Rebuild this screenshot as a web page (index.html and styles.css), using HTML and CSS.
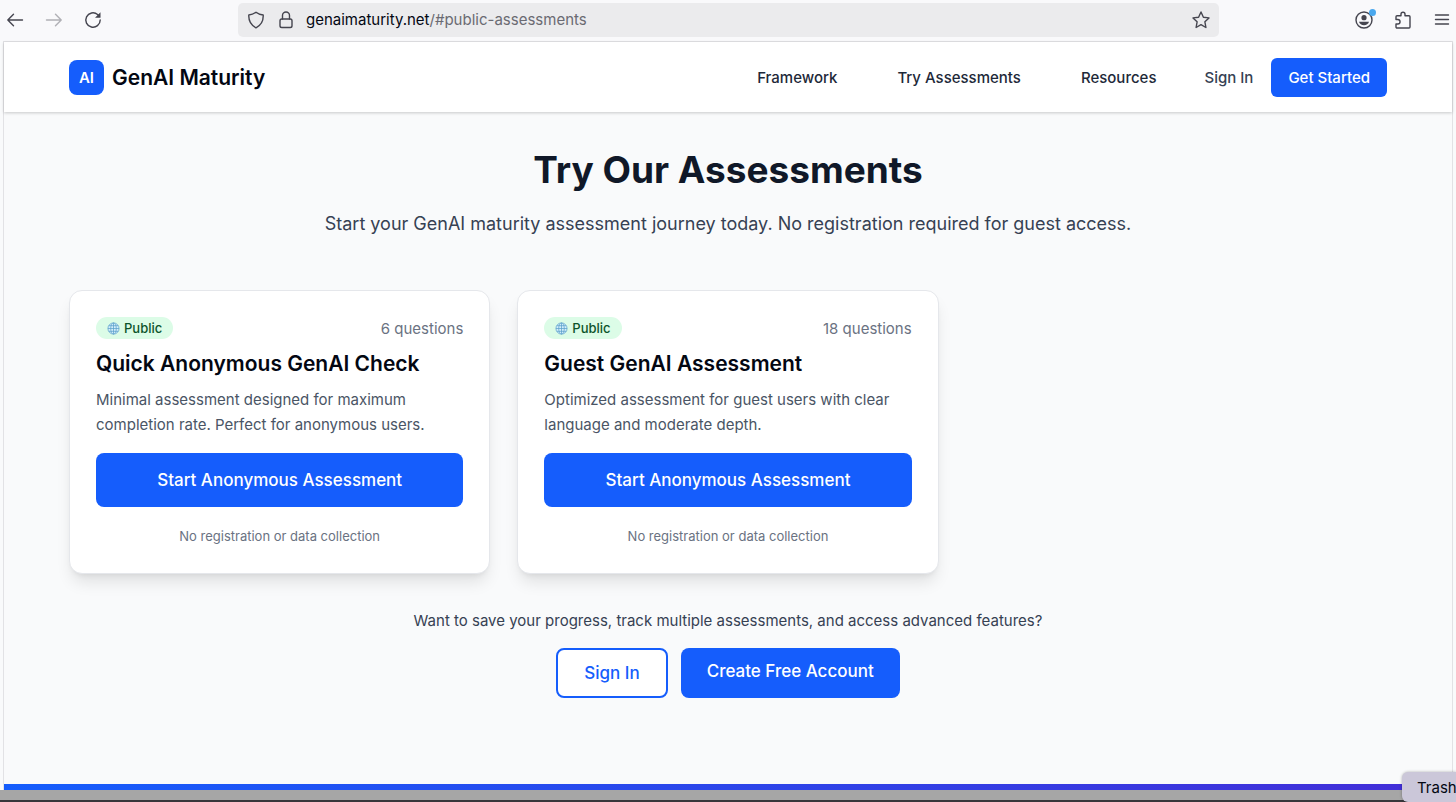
FILE: index.html
```
<!DOCTYPE html>
<html lang="en">
<head>
    <meta charset="utf-8">
    <title>GenAI Maturity</title>
    <link rel="stylesheet" href="styles.css">
</head>
<body>

<div class="toolbar">
    <div class="toolbar-nav">
        <button type="button" class="icon-btn" aria-label="Back">
            <svg viewBox="0 0 20 20"><path d="M17.500 10H2.800M8.500 4.300L2.800 10l5.700 5.700"/></svg>
        </button>
        <button type="button" class="icon-btn dim" aria-label="Forward">
            <svg viewBox="0 0 20 20"><path d="M2.500 10h14.700M11.500 4.300l5.700 5.700-5.700 5.700"/></svg>
        </button>
        <button type="button" class="icon-btn" aria-label="Reload">
            <svg viewBox="0 0 20 20"><path d="M17.200 10a7.200 7.200 0 1 1-2.600-5.500l1.800 1.800"/><path class="solid" d="M17.500 2.200v5.500H12z"/></svg>
        </button>
    </div>
    <div class="address">
        <svg class="icon" viewBox="0 0 20 20"><path d="M10 2.200c2.200 1.700 4.400 2.600 7.200 2.800.3 5.400-1.500 9.900-7.200 12.800C4.300 14.900 2.500 10.400 2.800 5 5.600 4.800 7.800 3.900 10 2.200z"/></svg>
        <svg class="icon" viewBox="0 0 20 20"><rect x="4" y="9" width="12" height="8.500" rx="1.800"/><path d="M6.500 9V5.500a3.500 3.500 0 0 1 7 0V9"/></svg>
        <span class="url">genaimaturity.net<span class="path">/#public-assessments</span></span>
        <button type="button" class="icon-btn" aria-label="Bookmark">
            <svg viewBox="0 0 20 20"><path d="M10 2l2.400 5.200 5.600.7-4.100 3.900 1 5.700-4.900-2.800-4.900 2.800 1-5.700L2 7.900l5.600-.7z"/></svg>
        </button>
    </div>
    <div class="toolbar-menu">
        <button type="button" class="icon-btn account" aria-label="Account">
            <svg viewBox="0 0 20 20"><circle cx="10" cy="10" r="8"/><circle class="solid" cx="10" cy="7.700" r="2.600"/><path class="solid" d="M5 11.800h10c-.6 2.200-2.600 3.500-5 3.500s-4.400-1.300-5-3.500z"/></svg>
            <span class="dot"></span>
        </button>
        <button type="button" class="icon-btn" aria-label="Extensions">
            <svg viewBox="0 0 20 20"><path d="M3 9V6.700a1 1 0 0 1 1-1h4V4.200a2 2 0 0 1 4 0v1.500h4a1 1 0 0 1 1 1V17a1 1 0 0 1-1 1H4a1 1 0 0 1-1-1v-3h1.800a2 2 0 0 0 0-4.500H3z"/></svg>
        </button>
        <button type="button" class="icon-btn" aria-label="Menu">
            <svg viewBox="0 0 20 20"><path d="M3.500 5h13M3.500 9.500h13M3.500 14h13"/></svg>
        </button>
    </div>
</div>

<div class="page">
    <header class="site-header">
        <a href="#" class="brand"><span class="logo">AI</span>GenAI Maturity</a>
        <nav>
            <a href="#framework">Framework</a>
            <a href="#public-assessments">Try Assessments</a>
            <a href="#resources">Resources</a>
        </nav>
        <a href="#signin" class="signin">Sign In</a>
        <button type="button" class="btn btn-small">Get Started</button>
    </header>

    <main id="public-assessments">
        <h1>Try Our Assessments</h1>
        <p class="lead">Start your GenAI maturity assessment journey today. No registration required for guest access.</p>

        <div class="cards">
            <section class="card">
                <div class="card-top">
                    <span class="badge"><svg viewBox="0 0 14 14"><circle cx="7" cy="7" r="6"/><ellipse cx="7" cy="7" rx="3" ry="6"/><path d="M7 1v12M1 7h12M2 4h10M2 10h10"/></svg>Public</span>
                    <span class="count">6 questions</span>
                </div>
                <h2>Quick Anonymous GenAI Check</h2>
                <p class="desc">Minimal assessment designed for maximum completion rate. Perfect for anonymous users.</p>
                <button type="button" class="btn btn-wide">Start Anonymous Assessment</button>
                <p class="note">No registration or data collection</p>
            </section>
            <section class="card">
                <div class="card-top">
                    <span class="badge"><svg viewBox="0 0 14 14"><circle cx="7" cy="7" r="6"/><ellipse cx="7" cy="7" rx="3" ry="6"/><path d="M7 1v12M1 7h12M2 4h10M2 10h10"/></svg>Public</span>
                    <span class="count">18 questions</span>
                </div>
                <h2>Guest GenAI Assessment</h2>
                <p class="desc">Optimized assessment for guest users with clear language and moderate depth.</p>
                <button type="button" class="btn btn-wide">Start Anonymous Assessment</button>
                <p class="note">No registration or data collection</p>
            </section>
        </div>

        <p class="prompt">Want to save your progress, track multiple assessments, and access advanced features?</p>
        <div class="actions">
            <button type="button" class="btn btn-outline">Sign In</button>
            <button type="button" class="btn btn-create">Create Free Account</button>
        </div>
    </main>

    <div class="banner"></div>
</div>
<div class="desktop-edge"></div>
<div class="trash">Trash</div>

</body>
</html>
```
FILE: styles.css
```
* { box-sizing: border-box; }
body { font-family: Inter, "Liberation Sans", sans-serif; background-color: #f9fafb; color: #030712; margin: 0; height: 100vh; display: flex; flex-direction: column; overflow: hidden; }
h1, h2, p { margin: 0; }
a { color: inherit; text-decoration: none; }
button { font-family: inherit; border: none; cursor: pointer; }

/* Browser toolbar */
.toolbar { display: flex; align-items: center; height: 41px; flex: none; padding: 0 5px; background: #f9f9fb; }
.toolbar svg { display: block; width: 20px; height: 20px; fill: none; stroke: #45454f; stroke-width: 1.4; stroke-linecap: round; stroke-linejoin: round; }
.toolbar .solid { fill: #45454f; stroke: none; }
.icon-btn { display: block; padding: 0; background: none; }
.dim { opacity: 0.4; }
.toolbar-nav { display: flex; gap: 19px; width: 233px; flex: none; margin-bottom: 2px; }
.address { display: flex; align-items: center; flex: 1; gap: 10px; height: 34px; padding: 0 8px; margin-bottom: 2px; background: #ebebed; border-radius: 5px; }
.url { flex: 1; font-size: 15px; }
.path { color: #6a6a72; }
.toolbar-menu { display: flex; gap: 19px; margin-left: 135px; margin-right: -1px; margin-bottom: 2px; }
.account { position: relative; }
.dot { position: absolute; top: -1px; right: -2px; width: 7px; height: 7px; border-radius: 50%; background: #4aa8ee; }

/* Page */
.page { flex: 1; display: flex; flex-direction: column; margin: 0 3px; border: 1px solid #e2e2e5; border-bottom: none; min-height: 0; }
.site-header { display: flex; align-items: center; height: 70px; flex: none; padding: 0 65px; background: white; box-shadow: 0 1px 3px rgba(0,0,0,0.2); font-size: 15px; font-weight: 500; color: #1e2939; }
.brand { display: flex; align-items: center; gap: 8px; margin-right: auto; font-size: 21px; font-weight: 600; color: #030712; }
.logo { display: flex; align-items: center; justify-content: center; width: 35px; height: 35px; border-radius: 8px; background: #155dfc; color: white; font-size: 15px; }
nav { display: flex; gap: 60px; }
.signin { margin: 0 18px 0 48px; color: #364153; }

.btn { background-color: #155dfc; color: white; border-radius: 8px; font-size: 17px; font-weight: 500; }
.btn:hover { background-color: #1447e6; }
.btn-small { height: 39px; padding: 0 17px; font-size: 15px; border-radius: 6px; }

main { flex: 1; padding: 32px 65px; text-align: center; min-height: 0; }
h1 { font-size: 37px; line-height: 52px; font-weight: 700; color: #101828; }
.lead { margin-top: 13px; font-size: 18px; line-height: 30px; color: #364153; }
.cards { display: grid; grid-template-columns: repeat(3, 1fr); gap: 27px; margin-top: 51px; text-align: left; }
.card { padding: 26px; background: white; border: 1px solid #e5e7eb; border-radius: 13px; box-shadow: 0 11px 16px -3px rgba(0,0,0,0.1), 0 4px 6px -4px rgba(0,0,0,0.1); }
.card-top { display: flex; align-items: center; justify-content: space-between; height: 22px; }
.badge { display: flex; align-items: center; gap: 4px; height: 22px; padding: 0 11px; border-radius: 11px; background: #dcfce7; color: #0d542b; font-size: 13px; font-weight: 500; }
.badge svg { width: 13px; height: 13px; fill: #d3effb; stroke: #5a9fca; stroke-width: 0.8; }
.count { font-size: 15px; color: #6a7282; }
h2 { margin-top: 10px; font-size: 21px; line-height: 30px; font-weight: 600; }
.desc { margin-top: 8px; font-size: 15px; line-height: 25px; color: #4a5565; }
.btn-wide { display: block; width: 100%; height: 54px; margin-top: 16px; }
.note { margin: 19px 0 1px; font-size: 13px; line-height: 20px; color: #6a7282; text-align: center; }
.prompt { margin-top: 34px; font-size: 15px; line-height: 26px; color: #364153; }
.actions { display: flex; justify-content: center; gap: 13px; margin-top: 14px; }
.actions .btn { height: 50px; padding: 0 26px; }
.actions .btn-outline { background: white; color: #155dfc; border: 2px solid #155dfc; }
.actions .btn-create { padding-bottom: 4px; }

.banner { height: 6px; flex: none; background: linear-gradient(to right, #155dfc, #432dd7); }
.desktop-edge { height: 12px; flex: none; background: #a6a6a6; border-bottom: 2px solid #38363b; }
.trash { position: absolute; right: 0; bottom: 0; width: 54px; height: 30px; padding-left: 15px; border-radius: 6px 0 0 6px; background: #cbc7d9; box-shadow: 0 0 3px rgba(0,0,0,0.3); font-size: 15px; line-height: 31px; overflow: hidden; white-space: nowrap; }
```
